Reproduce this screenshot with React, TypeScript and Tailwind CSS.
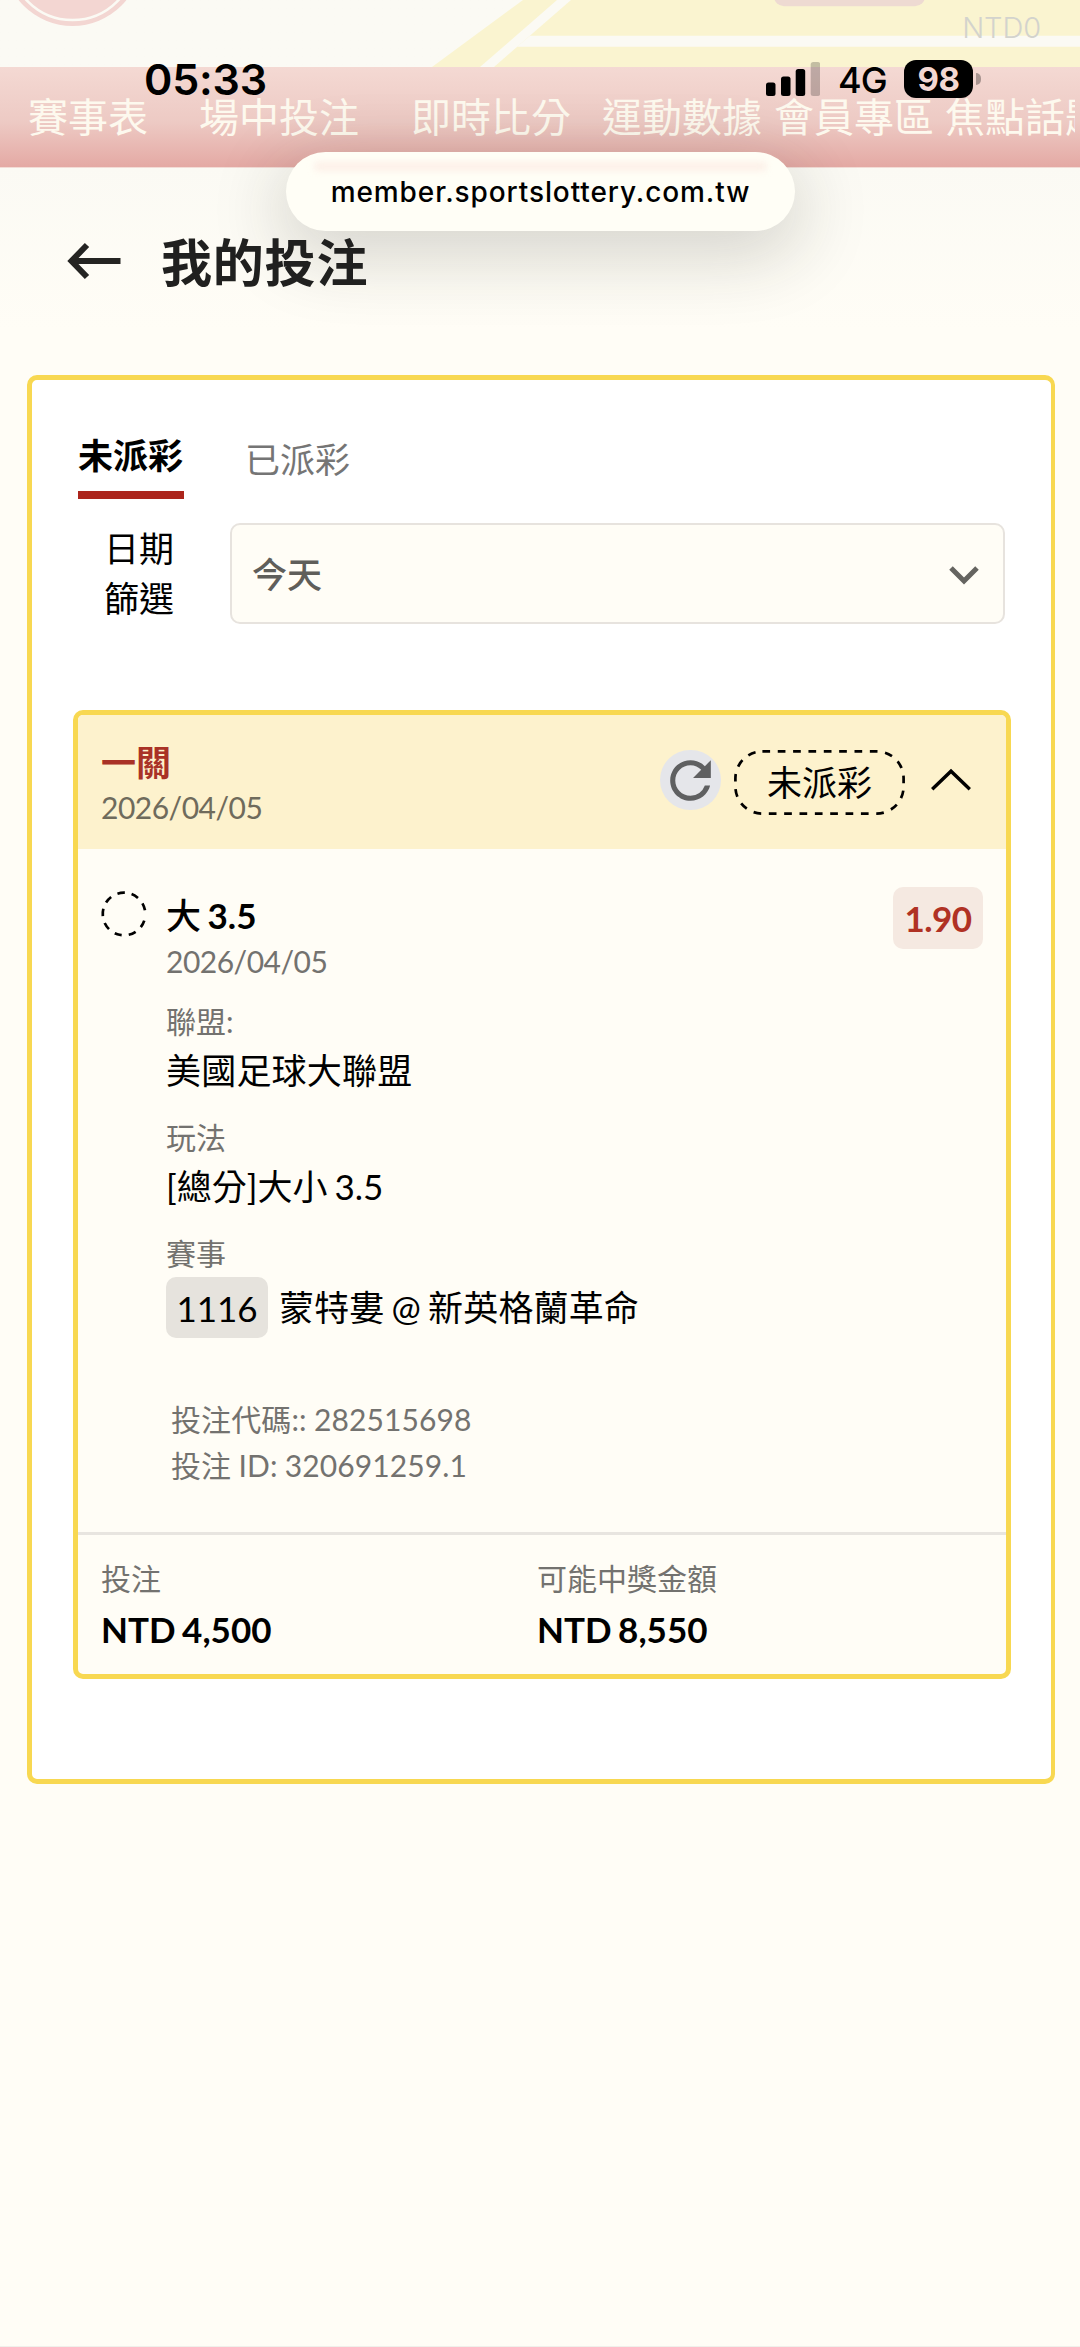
import React from 'react';
import { MdRefresh } from 'react-icons/md';

const navItems = [
  { label: '賽事表', className: 'w-[171px]' },
  { label: '場中投注', className: 'w-[212px]' },
  { label: '即時比分', className: 'w-[191px]' },
  { label: '運動數據', className: 'w-[172px]' },
  { label: '會員專區', className: 'w-[171px]' },
  { label: '焦點話題', className: 'w-[130px] overflow-hidden' },
];

const totals = [
  { label: '投注', value: 'NTD 4,500', className: 'w-[436px]' },
  { label: '可能中獎金額', value: 'NTD 8,550', className: 'flex-1' },
];

const StatusBar: React.FC = () => (
  <div className="absolute inset-x-0 top-[60px] flex h-[38px] items-center font-['Inter',sans-serif] text-black">
    <span className="ml-[144px] w-[622px] text-[43px] leading-[40px] font-semibold tracking-[-0.2px]">05:33</span>
    <svg className="h-[38px] w-[54px]" viewBox="0 0 54 38">
      <rect x="0" y="22.5" width="9.5" height="13.5" rx="2.5" />
      <rect x="15" y="16.5" width="9.5" height="19.5" rx="2.5" />
      <rect x="29.7" y="9" width="9.5" height="27" rx="2.5" />
      <rect x="44.7" y="2" width="9.5" height="34" rx="2.5" opacity="0.22" />
    </svg>
    <span className="mt-[2px] ml-[18px] w-[66px] text-[36px] leading-[40px] font-medium tracking-[-1px]">4G</span>
    <span className="flex h-[38px] w-[69px] items-center justify-center rounded-[12px] bg-black text-[33px] leading-none font-bold tracking-[-0.5px] text-[#f3d7d2]">
      98
    </span>
    <span className="ml-[3px] h-[12px] w-[5px] rounded-r-full bg-black/30" />
  </div>
);

const SiteHeader: React.FC = () => (
  <div className="relative h-[67px] overflow-hidden">
    <svg className="absolute inset-0 h-[67px] w-[1080px]" viewBox="0 0 1080 67">
      <circle cx="72.5" cy="-43" r="69" fill="#f3d6d2" />
      <circle cx="72.5" cy="-43" r="63" fill="none" stroke="#fbfaf4" strokeWidth="2.6" />
      <path d="M432 67 523 0H1080V67Z" fill="#faf4d0" />
      <path d="M480 67 557 0H571L494 67Z" fill="#fbfaf4" />
      <path d="M530 35.7H1080V46.7H517Z" fill="#fbfaf4" />
      <rect x="774" y="-20" width="151" height="26.3" rx="10" fill="#eedad2" />
    </svg>
    <span className="relative mt-[10px] mr-[39px] block text-right font-['Inter',sans-serif] text-[29px] leading-[36px] font-light tracking-[-0.1px] text-[#d3d3cd]">
      NTD0
    </span>
  </div>
);

const UrlPill: React.FC = () => (
  <div className="absolute top-[152px] left-[286px] flex h-[79px] w-[509px] items-center justify-center rounded-full bg-[#fffef6] shadow-[0_18px_70px_8px_rgba(40,40,30,0.18)]">
    <div className="absolute inset-x-[28px] top-[10px] h-[9px] rounded-full bg-[#fdf0e8] blur-[3px]" />
    <span className="relative font-['Inter',sans-serif] text-[28px] font-medium tracking-[0.9px] text-black">
      member.sportslottery.com.tw
    </span>
  </div>
);

const BetHeader: React.FC = () => (
  <div className="flex h-[134px] bg-[#fdf2cd] pl-[23px]">
    <div className="w-[559px] pt-[23px]">
      <div className="h-[47px] text-[35px] leading-[49px] font-bold text-[#a93226]">一關</div>
      <div className="h-[44px] text-[30px] leading-[44px] tracking-[-0.5px] text-[#6f6b5c]">2026/04/05</div>
    </div>
    <div className="mt-[35px] flex h-[60px] w-[61px] items-center justify-center rounded-full bg-[#e5e6ea]">
      <MdRefresh className="size-[61px] shrink-0 text-[#5f6061]" />
    </div>
    <div className="relative mt-[35px] ml-[13px] flex h-[65px] w-[171px] items-center justify-center pb-[2px] text-[35px] leading-[50px] text-black">
      <svg className="absolute inset-0 h-[65px] w-[171px]" viewBox="0 0 171 65" fill="none" stroke="#000" strokeWidth="2.7">
        <rect x="1.4" y="1.4" width="168.2" height="62.2" rx="27" strokeDasharray="7.7 7.65" />
      </svg>
      未派彩
    </div>
    <svg className="mt-[53px] ml-[25px] h-[24px] w-[42px]" viewBox="0 0 42 24" fill="none" stroke="#000" strokeWidth="3.4">
      <path d="M2.2 21.3 21 3.2 39.8 21.3" />
    </svg>
  </div>
);

const BetDetails: React.FC = () => (
  <div className="flex h-[683px] pl-[23px] [word-spacing:-2px]">
    <svg className="mt-[42px] size-[46px]" viewBox="0 0 46 46" fill="none" stroke="#000" strokeWidth="2.7">
      <circle
        cx="23"
        cy="23"
        r="21.3"
        pathLength="360"
        transform="rotate(18 23 23)"
        strokeDasharray="20 19 20 19 20 19 20 19 20 19 20 19 20 19 20 19 20 28"
      />
    </svg>
    <div className="ml-[19px] flex-1 text-black">
      <div className="flex h-[93px]">
        <div className="flex-1 pt-[41px]">
          <div className="h-[50px] text-[35px] leading-[50px] font-bold">
            <span className="font-medium">大</span> 3.5
          </div>
        </div>
        <div className="mt-[38px] mr-[23px] flex h-[62px] w-[90px] items-center justify-center rounded-[10px] bg-[#f5e9e1] text-[35px] font-bold tracking-[-0.6px] text-[#b03224]">
          1.90
        </div>
      </div>
      <div className="mt-[-3px] h-[60px] text-[30px] leading-[44px] tracking-[-0.5px] text-[#73726f]">2026/04/05</div>

      <div className="h-[46px] text-[30px] leading-[44px] text-[#73726f]">聯盟:</div>
      <div className="h-[70px] text-[35px] leading-[50px] tracking-[0.2px]">美國足球大聯盟</div>
      <div className="h-[46px] text-[30px] leading-[44px] text-[#73726f]">玩法</div>
      <div className="h-[70px] text-[35px] leading-[50px]">[總分]大小 3.5</div>
      <div className="h-[46px] text-[30px] leading-[44px] text-[#73726f]">賽事</div>
      <div className="flex h-[61px] items-center pb-[2px] text-[35px] leading-[50px]">
        <span className="mt-[2px] mr-[11px] flex h-[61px] w-[102px] items-center justify-center rounded-[10px] bg-[#e6e3dd]">
          1116
        </span>
        <span className="tracking-[0.15px]">蒙特婁 @ 新英格蘭革命</span>
      </div>
      <div className="mt-[59px] pl-[5px] text-[30px] tracking-[0.1px] text-[#73726f] [word-spacing:-0.5px]">
        <div className="h-[45px] leading-[45px]">投注代碼:: 282515698</div>
        <div className="h-[45px] leading-[46px]">投注 ID: 320691259.1</div>
      </div>
    </div>
  </div>
);

const BetCard: React.FC = () => (
  <div className="ml-[41px] h-[969px] w-[938px] overflow-hidden rounded-[10px] border-5 border-[#f8d851] bg-[#fffdf6]">
    <BetHeader />
    <BetDetails />
    <div className="flex border-t-3 border-[#e8e5e0] pt-[21px] pl-[23px]">
      {totals.map((total) => (
        <div key={total.label} className={total.className}>
          <div className="h-[48px] text-[30px] leading-[44px] text-[#73726f]">{total.label}</div>
          <div className="h-[50px] text-[35px] leading-[50px] font-bold text-black [word-spacing:-2px]">{total.value}</div>
        </div>
      ))}
    </div>
  </div>
);

export default function App() {
  return (
    <div className="relative h-[2347px] w-[1080px] overflow-hidden border-b border-[#f0f0ea] bg-[#fffdf6] font-['Lato','Noto_Sans_CJK_TC',sans-serif]">
      <div className="h-[330px] bg-linear-to-b from-[#fbfaf4] from-50% to-[#fffdf6]">
        <SiteHeader />
        <div className="flex h-[101px] border-b border-[#f3dcd6] bg-linear-to-b from-[#f4d9d3] via-[#edcac4] via-55% to-[#e4a9a4] pt-[22px] pl-[28px] text-[40px] leading-[56px] text-[#fdf9ee]">
          {navItems.map((item) => (
            <span key={item.label} className={`shrink-0 whitespace-nowrap ${item.className}`}>
              {item.label}
            </span>
          ))}
        </div>
      </div>

      <UrlPill />
      <StatusBar />

      <div className="relative -mt-[110px] flex h-[155px] pl-[67px]">
        <svg className="mt-[22px] h-[38px] w-[54px]" viewBox="0 0 54 38" fill="none" stroke="#242422" strokeWidth="6">
          <path d="M53.5 19H5M20 3 4.5 19 20 35" />
        </svg>
        <h1 className="mt-[1px] ml-[40px] text-[51px] leading-[84px] font-bold tracking-[0.8px] text-[#20201f]">我的投注</h1>
      </div>

      <div className="ml-[27px] h-[1409px] w-[1028px] rounded-[10px] border-5 border-r-4 border-[#f8d851] bg-white">
        <div className="flex h-[143px] pl-[46px] text-[35px]">
          <div className="mt-[50px] h-[69px] w-[106px] border-b-8 border-[#ac251c] leading-[50px] font-bold text-black">未派彩</div>
          <div className="mt-[54px] ml-[61px] leading-[50px] text-[#757575]">已派彩</div>
        </div>
        <div className="flex h-[187px] pl-[72px]">
          <div className="w-[70px] text-right text-[35px] leading-[50px] text-black">
            <div className="h-[50px]">日期</div>
            <div className="h-[50px]">篩選</div>
          </div>
          <div className="ml-[56px] flex h-[101px] w-[775px] items-center justify-between rounded-[10px] border-2 border-[#e7e3de] bg-[#fffdf6] pr-[22px] pl-[20px]">
            <span className="text-[35px] leading-[50px] font-medium text-[#5f5e5a]">今天</span>
            <svg className="mt-[2px] h-[20px] w-[34px]" viewBox="0 0 34 20" fill="none" stroke="#656460" strokeWidth="5">
              <path d="M4 3 17 16 30 3" />
            </svg>
          </div>
        </div>
        <BetCard />
      </div>
    </div>
  );
}
